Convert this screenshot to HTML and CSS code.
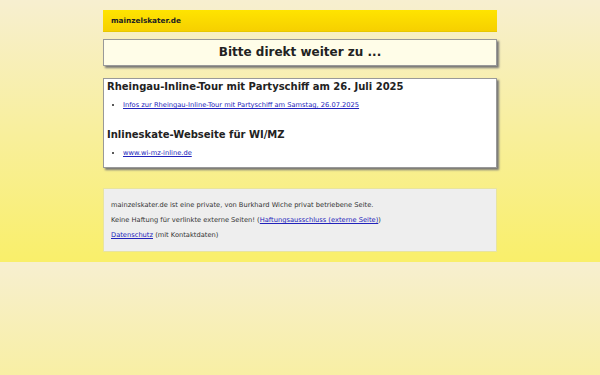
FILE: index.html
```html
<!DOCTYPE html>
<html lang="de">
<head>
	<meta charset="UTF-8">
	<title>mainzelskater.de</title>
	<link rel="stylesheet" href="styles.css">
</head>
<body>
	<div class="page">
		<div class="kopf">mainzelskater.de</div>
		<div class="weiter">Bitte direkt weiter zu ...</div>
		<div class="inhalt">
			<h2>Rheingau-Inline-Tour mit Partyschiff am 26. Juli 2025</h2>
			<ul>
				<li><a href="#">Infos zur Rheingau-Inline-Tour mit Partyschiff am Samstag, 26.07.2025</a></li>
			</ul>
			<h2>Inlineskate-Webseite für WI/MZ</h2>
			<ul>
				<li><a href="#">www.wi-mz-inline.de</a></li>
			</ul>
		</div>
		<div class="fuss">
			<p>mainzelskater.de ist eine private, von Burkhard Wiche privat betriebene Seite.</p>
			<p>Keine Haftung für verlinkte externe Seiten! (<a href="#">Haftungsausschluss (externe Seite)</a>)</p>
			<p><a href="#">Datenschutz</a> (mit Kontaktdaten)</p>
		</div>
	</div>
</body>
</html>
```

FILE: styles.css
```css
body{
	margin: 0;
	padding: 10px 0;
	font-family: "DejaVu Sans", Verdana, sans-serif;
	background: linear-gradient(#f7efd0, #f9ef6a);
	color: #222;
}
.page{
	width: 394px;
	margin: 0 auto;
}
.kopf{
	height: 22px;
	line-height: 21px;
	padding: 0 8px;
	font-size: 7.3px;
	font-weight: bold;
	background: linear-gradient(#ffe400, #f6d000);
	border-bottom: 1px solid #e8c800;
	box-sizing: border-box;
}
.weiter{
	margin-top: 7px;
	height: 27px;
	line-height: 25px;
	box-sizing: border-box;
	text-align: center;
	font-size: 12px;
	font-weight: bold;
	background: #fffde8;
	border: 1px solid #999;
	box-shadow: 2px 2px 2px #777;
}
.inhalt{
	margin-top: 12px;
	height: 90px;
	box-sizing: border-box;
	padding: 2px 3px;
	background: #fff;
	border: 1px solid #999;
	box-shadow: 2px 2px 2px #777;
}
.inhalt h2{
	font-size: 10px;
	margin: 0;
	line-height: 12px;
}
.inhalt ul{
	margin: 6px 0 18px;
	padding-left: 16px;
	font-size: 6.7px;
	line-height: 12px;
}
a{
	color: #2222bb;
}
.fuss{
	margin-top: 20px;
	height: 64px;
	box-sizing: border-box;
	padding: 9px 7px;
	background: #eeeeee;
	border: 1px solid #e8e4a0;
	font-size: 6.7px;
	color: #333;
}
.fuss p{
	margin: 0;
	line-height: 15px;
}
```
